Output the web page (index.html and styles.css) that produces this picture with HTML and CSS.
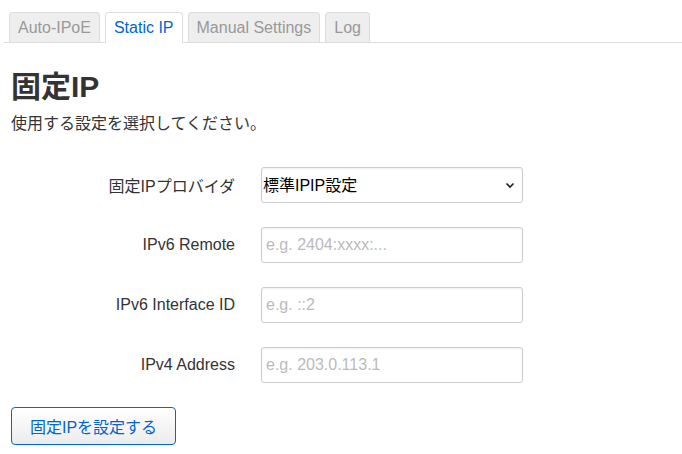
FILE: index.html
```html
<!DOCTYPE html>
<html lang="ja">
<head>
    <meta charset="UTF-8">
    <title>固定IP</title>
    <link rel="stylesheet" href="styles.css">
</head>
<body>
    <ul class="tabs">
        <li class="tab">Auto-IPoE</li>
        <li class="tab active">Static IP</li>
        <li class="tab">Manual Settings</li>
        <li class="tab">Log</li>
    </ul>

    <div class="content">
        <h1>固定IP</h1>
        <p class="lead">使用する設定を選択してください。</p>

        <div class="form">
            <label class="label">固定IPプロバイダ</label>
            <div class="select-wrap">
                <select class="field select">
                    <option>標準IPIP設定</option>
                </select>
                <svg class="chevron" width="10" height="7" viewBox="0 0 10 7"><path d="M1.5 1.5 L5 5 L8.5 1.5" fill="none" stroke="#222" stroke-width="1.6"/></svg>
            </div>

            <label class="label">IPv6 Remote</label>
            <input class="field" type="text" placeholder="e.g. 2404:xxxx:...">

            <label class="label">IPv6 Interface ID</label>
            <input class="field" type="text" placeholder="e.g. ::2">

            <label class="label">IPv4 Address</label>
            <input class="field" type="text" placeholder="e.g. 203.0.113.1">
        </div>

        <button class="submit-btn">固定IPを設定する</button>
    </div>
</body>
</html>
```

FILE: styles.css
```css
body {
    margin: 0;
    padding: 12px 0 0 4px;
    font-family: "Liberation Sans", Arial, "Noto Sans CJK JP", sans-serif;
    color: #333;
    background: #fff;
}
.tabs {
    list-style: none;
    margin: 0;
    padding: 0 0 0 5px;
    display: flex;
    gap: 5px;
    border-bottom: 1px solid #ddd;
}
.tab {
    height: 29px;
    line-height: 30px;
    padding: 0 8px;
    font-size: 16px;
    color: #999;
    background: #eee;
    border: 1px solid #ddd;
    border-bottom: none;
    border-radius: 4px 4px 0 0;
    margin-bottom: -1px;
}
.tab.active {
    background: #fff;
    color: #0066cc;
    height: 30px;
}
.content {
    padding: 0 7px;
}
h1 {
    margin: 26px 0 0;
    font-size: 30px;
    line-height: 36px;
    font-weight: bold;
    color: #333;
}
.lead {
    margin: 9px 0 0;
    font-size: 16px;
    line-height: 20px;
}
.form {
    display: grid;
    grid-template-columns: 224px 262px;
    column-gap: 26px;
    row-gap: 24px;
    margin-top: 33px;
    align-items: center;
}
.label {
    text-align: right;
    font-size: 16px;
    color: #333;
}
.field {
    box-sizing: border-box;
    width: 262px;
    height: 36px;
    margin: 0;
    padding: 0 4px;
    font-family: inherit;
    font-size: 16px;
    color: #000;
    border: 1px solid #ccc;
    border-radius: 3px;
    box-shadow: inset 0 1px 2px rgba(0,0,0,0.06);
    background: #fff;
}
.field::placeholder {
    color: #bbb;
}
.select-wrap {
    position: relative;
}
.select {
    appearance: none;
    padding: 0 0 0 1px;
}
.chevron {
    position: absolute;
    right: 8px;
    top: 15px;
    pointer-events: none;
}
.submit-btn {
    margin-top: 24px;
    width: 165px;
    height: 38px;
    font-family: inherit;
    font-size: 16px;
    color: #0066cc;
    background: linear-gradient(#fff, #ececec);
    border: 1px solid #0066dd;
    border-radius: 4px;
}
```
